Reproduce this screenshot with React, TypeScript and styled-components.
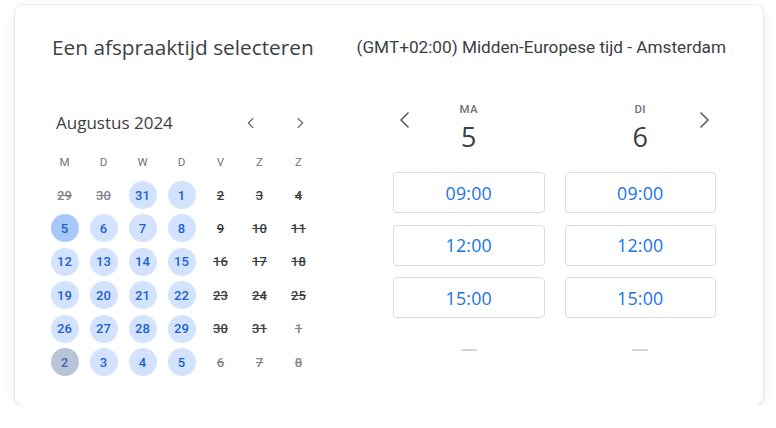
import React from "react";
import styled, { createGlobalStyle } from "styled-components";

const Global = createGlobalStyle`
  html, body { margin: 0; padding: 0; background: #ffffff; }
  body { font-family: Roboto, "Noto Sans", Arial, sans-serif; color: #3c4043; }
`;

const display = `"Open Sans", Roboto, Arial, sans-serif`;

const Page = styled.div`
  padding: 5px 0 0 15px;
  width: 776px;
  box-sizing: border-box;
`;

const Card = styled.div`
  width: 748px;
  height: 400px;
  box-sizing: border-box;
  background: #fff;
  border-radius: 8px;
  box-shadow: 0 0 0 1px rgba(0, 0, 0, 0.035), 0 1px 3px rgba(60, 64, 67, 0.12),
    0 4px 14px rgba(60, 64, 67, 0.08);
  padding-top: 30px;
`;

const Header = styled.div`
  display: flex;
  align-items: center;
  justify-content: space-between;
  padding: 0 37px 0 37px;
  height: 24px;
`;

const Title = styled.h1`
  margin: 0;
  font-family: ${display};
  font-size: 20.8px;
  font-weight: 400;
  line-height: 24px;
  color: #3c4043;
`;

const TimeZone = styled.div`
  font-size: 17.2px;
  line-height: 24px;
  color: #3c4043;
`;

const Body = styled.div`
  display: flex;
  margin-top: 41px;
  padding-left: 30px;
`;

const Calendar = styled.div`
  width: 273px;
`;

const MonthBar = styled.div`
  height: 45px;
  display: flex;
  align-items: center;
  padding: 0 6px 0 11px;
`;

const MonthName = styled.div`
  font-family: ${display};
  font-size: 17px;
  font-weight: 500;
  color: #3c4043;
  flex: 1;
`;

const SmallNav = styled.button<{ $gap?: number }>`
  width: 24px;
  height: 24px;
  border: none;
  background: none;
  padding: 0;
  display: flex;
  align-items: center;
  justify-content: center;
  color: #5f6368;
  margin-left: ${(p) => p.$gap ?? 0}px;
`;

const Grid = styled.div`
  display: grid;
  grid-template-columns: repeat(7, 39px);
  grid-auto-rows: 33.4px;
`;

const WeekDay = styled.div`
  display: flex;
  align-items: center;
  justify-content: center;
  font-size: 11.5px;
  font-weight: 400;
  color: #70757a;
`;

type DayKind = "free" | "selected" | "today" | "off" | "offLight";

const DayCell = styled.div`
  display: flex;
  align-items: center;
  justify-content: center;
`;

const DayCircle = styled.div<{ $kind: DayKind }>`
  width: 28px;
  height: 28px;
  border-radius: 50%;
  display: flex;
  align-items: center;
  justify-content: center;
  font-size: 13px;
  font-weight: 500;
  background: ${(p) =>
    p.$kind === "free"
      ? "#d3e3fd"
      : p.$kind === "selected"
      ? "#a8c7fa"
      : p.$kind === "today"
      ? "#b8c4d8"
      : "transparent"};
  color: ${(p) =>
    p.$kind === "off"
      ? "#3c4043"
      : p.$kind === "offLight"
      ? "#80868b"
      : p.$kind === "today"
      ? "#3f63ad"
      : "#1a62cc"};
  text-decoration: ${(p) =>
    p.$kind === "off" || p.$kind === "offLight" ? "line-through" : "none"};
`;

const Slots = styled.div`
  margin-left: 75px;
  width: 323px;
  display: grid;
  grid-template-columns: 1fr 1fr;
  column-gap: 20px;
`;

const DayColumn = styled.div`
  display: flex;
  flex-direction: column;
  gap: 11.5px;
`;

const DayHead = styled.div`
  display: grid;
  grid-template-columns: 24px 1fr 24px;
  height: 56px;
  margin-bottom: 4.5px;
`;

const DayHeadCenter = styled.div`
  grid-column: 2;
  display: flex;
  flex-direction: column;
  align-items: center;
`;

const DayAbbr = styled.div`
  font-size: 11.5px;
  font-weight: 500;
  line-height: 18px;
  color: #70757a;
  letter-spacing: 0.3px;
`;

const DayNum = styled.div`
  font-family: ${display};
  font-size: 27px;
  line-height: 38px;
  color: #3c4043;
`;

const BigNav = styled.button<{ $side: "left" | "right" }>`
  grid-column: ${(p) => (p.$side === "left" ? 1 : 3)};
  grid-row: 1;
  align-self: start;
  margin-top: 8px;
  width: 24px;
  height: 24px;
  border: none;
  background: none;
  padding: 0;
  display: flex;
  align-items: center;
  justify-content: center;
  color: #5f6368;
`;

const SlotButton = styled.button`
  height: 41px;
  border: 1px solid #dadce0;
  border-radius: 4px;
  background: #fff;
  font-family: ${display};
  font-size: 17.8px;
  font-weight: 500;
  color: #1a73e8;
  letter-spacing: 0.2px;
  padding: 0;
`;

const DashRow = styled.div`
  height: 41px;
  display: flex;
  align-items: center;
  justify-content: center;
`;

const Dash = styled.div`
  width: 16px;
  height: 2px;
  background: #d2d4d7;
  border-radius: 1px;
`;

const Chevron = ({ dir, size, stroke }: { dir: "l" | "r"; size: number; stroke: number }) => (
  <svg width={size} height={size} viewBox="0 0 24 24" fill="none">
    <path
      d={dir === "l" ? "M15 5 L8 12 L15 19" : "M9 5 L16 12 L9 19"}
      stroke="currentColor"
      strokeWidth={stroke}
      strokeLinecap="round"
      strokeLinejoin="round"
    />
  </svg>
);

const weekDays = ["M", "D", "W", "D", "V", "Z", "Z"];

const days: [number, DayKind][] = [
  [29, "offLight"], [30, "offLight"], [31, "free"], [1, "free"], [2, "off"], [3, "off"], [4, "off"],
  [5, "selected"], [6, "free"], [7, "free"], [8, "free"], [9, "off"], [10, "off"], [11, "off"],
  [12, "free"], [13, "free"], [14, "free"], [15, "free"], [16, "off"], [17, "off"], [18, "off"],
  [19, "free"], [20, "free"], [21, "free"], [22, "free"], [23, "off"], [24, "off"], [25, "off"],
  [26, "free"], [27, "free"], [28, "free"], [29, "free"], [30, "off"], [31, "off"], [1, "offLight"],
  [2, "today"], [3, "free"], [4, "free"], [5, "free"], [6, "offLight"], [7, "offLight"], [8, "offLight"],
];

const columns = [
  { abbr: "MA", num: 5, nav: "left" as const },
  { abbr: "DI", num: 6, nav: "right" as const },
];

const times = ["09:00", "12:00", "15:00"];

export default function App() {
  return (
    <>
      <Global />
      <Page>
        <Card>
          <Header>
            <Title>Een afspraaktijd selecteren</Title>
            <TimeZone>(GMT+02:00) Midden-Europese tijd - Amsterdam</TimeZone>
          </Header>
          <Body>
            <Calendar>
              <MonthBar>
                <MonthName>Augustus 2024</MonthName>
                <SmallNav aria-label="Vorige maand">
                  <Chevron dir="l" size={16} stroke={1.8} />
                </SmallNav>
                <SmallNav aria-label="Volgende maand" $gap={25}>
                  <Chevron dir="r" size={16} stroke={1.8} />
                </SmallNav>
              </MonthBar>
              <Grid>
                {weekDays.map((d, i) => (
                  <WeekDay key={"w" + i}>{d}</WeekDay>
                ))}
                {days.map(([n, k], i) => (
                  <DayCell key={i}>
                    <DayCircle $kind={k}>{n}</DayCircle>
                  </DayCell>
                ))}
              </Grid>
            </Calendar>
            <Slots>
              {columns.map((c) => (
                <DayColumn key={c.abbr}>
                  <DayHead>
                    <BigNav $side={c.nav} aria-label={c.nav === "left" ? "Vorige" : "Volgende"}>
                      <Chevron dir={c.nav === "left" ? "l" : "r"} size={24} stroke={1.7} />
                    </BigNav>
                    <DayHeadCenter>
                      <DayAbbr>{c.abbr}</DayAbbr>
                      <DayNum>{c.num}</DayNum>
                    </DayHeadCenter>
                  </DayHead>
                  {times.map((t) => (
                    <SlotButton key={t}>{t}</SlotButton>
                  ))}
                  <DashRow>
                    <Dash />
                  </DashRow>
                </DayColumn>
              ))}
            </Slots>
          </Body>
        </Card>
      </Page>
    </>
  );
}
